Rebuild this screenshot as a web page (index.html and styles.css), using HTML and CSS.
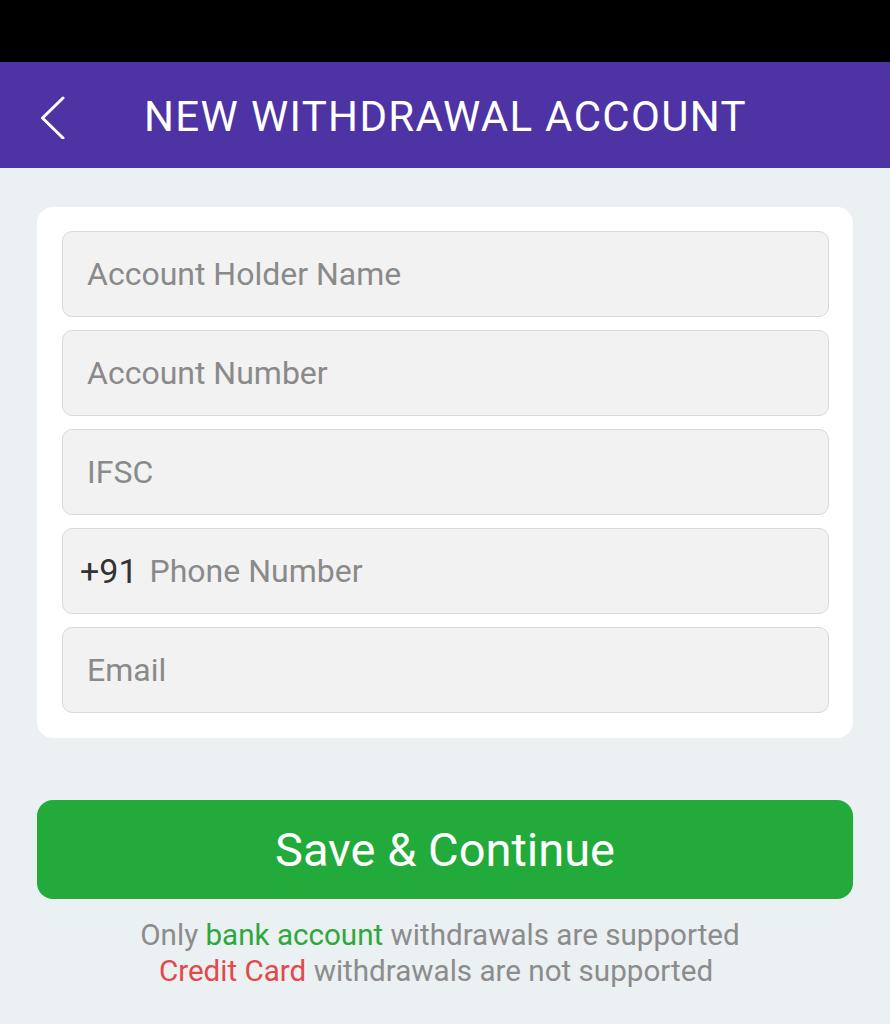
FILE: index.html
```html
<!DOCTYPE html>
<html>
<head>
<meta charset="utf-8">
<link rel="stylesheet" href="styles.css">
</head>
<body>
<div class="status"></div>
<header class="topbar">
  <span class="back">
    <svg width="28" height="48" viewBox="0 0 28 48"><path d="M25 7 L4.5 27 L25 47" fill="none" stroke="#fff" stroke-width="3" stroke-linecap="round" stroke-linejoin="round"/></svg>
  </span>
  <h1 class="title">NEW WITHDRAWAL ACCOUNT</h1>
</header>
<main class="content">
  <section class="card">
    <div class="field"><span class="ph">Account Holder Name</span></div>
    <div class="field"><span class="ph">Account Number</span></div>
    <div class="field"><span class="ph">IFSC</span></div>
    <div class="field phone"><span class="code">+91</span><span class="ph">Phone Number</span></div>
    <div class="field"><span class="ph">Email</span></div>
  </section>
  <button class="save">Save &amp; Continue</button>
  <p class="note"><span class="line">Only <span class="green">bank account</span> withdrawals are supported</span><span class="line line2"><span class="red">Credit Card</span> withdrawals are not supported</span></p>
</main>
</body>
</html>
```
FILE: styles.css
```css
* { box-sizing: border-box; }
html, body { margin: 0; padding: 0; }
body {
  width: 890px;
  height: 1024px;
  background: #ebf0f2;
  font-family: Roboto, "Noto Sans", sans-serif;
  overflow: hidden;
}
.status { height: 62px; background: #000; }
.topbar {
  height: 106px;
  background: #4e33a4;
  display: flex;
  align-items: center;
  padding-left: 38px;
}
.back { display: flex; width: 28px; height: 48px; }
.title {
  margin: 4px 0 0 78px;
  color: #fff;
  font-weight: 400;
  font-size: 42px;
  letter-spacing: 1.35px;
  line-height: 1;
}
.content { padding: 39px 37px 0 37px; }
.card {
  background: #fff;
  border-radius: 16px;
  padding: 24px 24px 25px 25px;
  display: flex;
  flex-direction: column;
  gap: 13px;
}
.field {
  height: 86px;
  background: #f2f2f2;
  border: 1.5px solid #d9d9d9;
  border-radius: 10px;
  display: flex;
  align-items: center;
  padding-left: 24px;
  font-size: 32px;
}
.ph { color: #8a8a8a; }
.phone { padding-left: 17px; }
.code { color: #333; margin-right: 12px; font-size: 34px; }
.save {
  display: block;
  width: 100%;
  height: 99px;
  margin-top: 62px;
  border: none;
  border-radius: 16px;
  background: #22ab3b;
  color: #fff;
  font-family: Roboto, "Noto Sans", sans-serif;
  font-size: 47px;
  font-weight: 400;
}
.note {
  margin: 18px 0 0 0;
  display: flex;
  flex-direction: column;
  align-items: center;
  color: #8c8c8c;
  font-size: 29.6px;
  line-height: 36px;
}
.line { display: block; padding-right: 10px; }
.line2 { padding-right: 18px; }
.green { color: #2ea83e; }
.red { color: #e04a4a; }
```
